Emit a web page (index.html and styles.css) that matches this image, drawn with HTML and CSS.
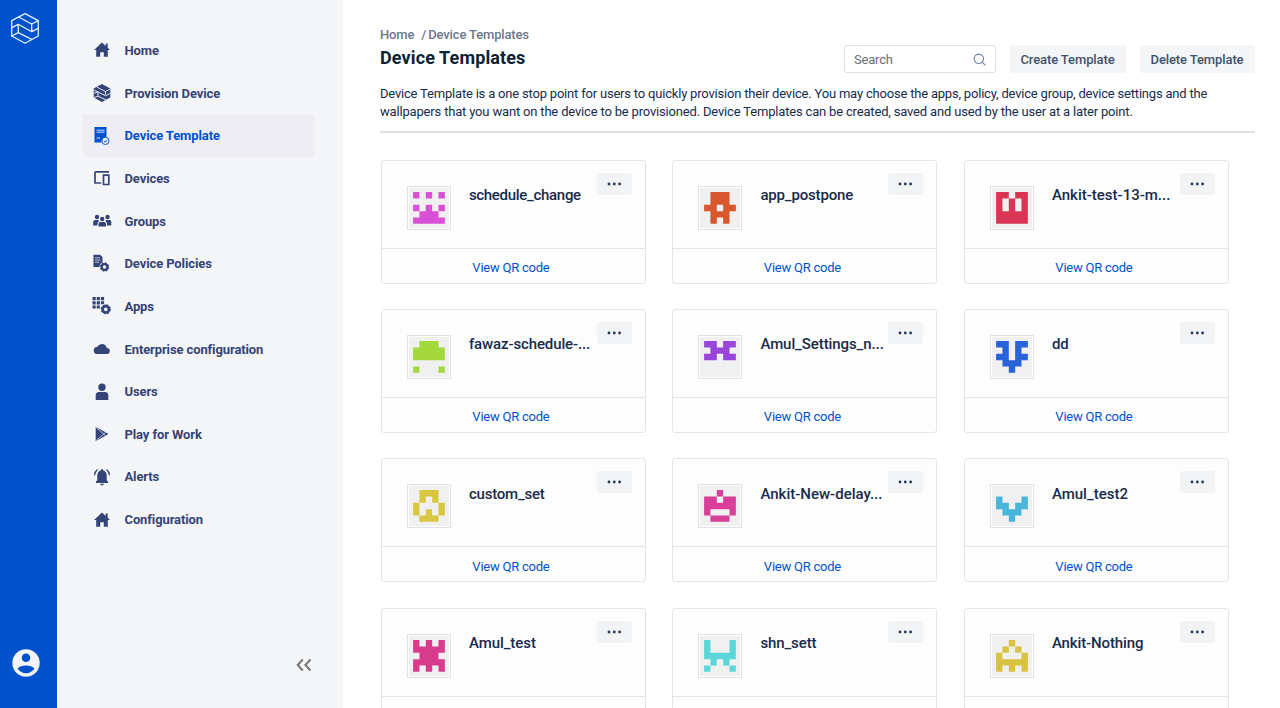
FILE: index.html
```html
<!DOCTYPE html>
<html lang="en">
<head>
<meta charset="utf-8">
<title>Device Templates</title>
<link rel="stylesheet" href="styles.css">
</head>
<body>
<div class="app">
  <aside class="rail">
    <svg class="logo" width="30" height="33" viewBox="0 0 30 33" fill="none" stroke="#e9f0fc" stroke-width="1.3" stroke-linejoin="round" stroke-linecap="round">
      <path d="M15 1.700 28.300 8.700V24L15 31.300 1.700 24V8.700Z"/>
      <path d="M9 5.300 21.700 12 28.300 8.700M21.700 12v7.700M1.700 15.700 8.300 12.300 21.700 19.700 28.300 16.300M8.300 12.300v8.400L21.700 27.300M8.300 20.700 1.700 24"/>
    </svg>
    <svg class="avatar" width="28" height="28" viewBox="0 0 28 28">
      <circle cx="14" cy="14" r="13.700" fill="#f4f5f7"/>
      <circle cx="14" cy="8.700" r="4.300" fill="#0052cc"/>
      <path d="M5.500 19.500C8.500 15.600 19.500 15.600 22.500 19.500 18.500 25.800 9.500 25.800 5.500 19.500Z" fill="#0052cc"/>
    </svg>
  </aside>
  <div class="side">
    <nav class="nav">
      <a class="item"><svg class="icon" viewBox="0 0 18 18"><path d="M9 1.500 1 9h2.200v6.800h4v-4.500h3.600v4.500h4V9H17l-2.300-2.200V2.500h-2v2.400Z"/></svg><span>Home</span></a>
      <a class="item"><svg class="icon" viewBox="0 0 18 18"><path d="M9 0 17.300 4.500v9L9 18 .7 13.500v-9Z"/><path d="M4 3.200 12.500 7.500v3.300M12.500 7.500 17.300 5M.7 6 12.500 11.700l4.800-2.200M.7 9.500 5 7.700v4.500l8.500 4M5 12.200.7 13.700" fill="none" stroke="#f4f5f7" stroke-width=".9"/></svg><span>Provision Device</span></a>
      <a class="item active"><svg class="icon" viewBox="0 0 18 18"><path d="M1.500 0h12v10.500a4.600 4.600 0 0 0-5 5h-7Z"/><path d="M3.500 3.200h8M3.500 5.200h8M3.500 11h3.500" stroke="#eeedf4" stroke-width=".9" fill="none"/><circle cx="12.500" cy="13.900" r="3.600" fill="#eeedf4" stroke="#0052cc" stroke-width=".9"/><path d="m10.800 13.900 1.300 1.300 2.200-2.400" fill="none" stroke="#0052cc"/></svg><span>Device Template</span></a>
      <a class="item"><svg class="icon" viewBox="0 0 18 18" fill="none"><path d="M16 2.800H3.200Q2 2.800 2 4v10h6.200M10.500 6.200h5.300V15.500h-5.300Z" fill="none" stroke="#344378" stroke-width="1.700"/></svg><span>Devices</span></a>
      <a class="item"><svg class="icon" viewBox="0 0 18 18"><circle cx="4" cy="5" r="2.200"/><circle cx="14.500" cy="5" r="2.200"/><circle cx="9.200" cy="7" r="2.200"/><path d="M.2 13.500V10q0-2 2-2h3.500v1.500L4.500 11v2.500ZM18.300 13.500V10q0-2-2-2h-3.500v1.500l1.200 1.500v2.500ZM5.500 14.500V12q0-2 2-2h3.500q2 0 2 2v2.500Z"/></svg><span>Groups</span></a>
      <a class="item"><svg class="icon" viewBox="0 0 18 18"><path d="M.5-.3H7L9.500 2v5.500Q6.300 9 6.500 12h-6Z"/><path d="M2 2.800h5M2 5h5.500M2 7.200h4.500" stroke="#f4f5f7" stroke-width=".7"/><circle cx="11.500" cy="12" r="2.900" fill="none" stroke="#344378" stroke-width="2.300"/><circle cx="11.500" cy="12" r="4.100" fill="none" stroke="#344378" stroke-width="1.200" stroke-dasharray="1.720 1.500"/></svg><span>Device Policies</span></a>
      <a class="item"><svg class="icon" viewBox="0 0 18 18"><path d="M-.5 0h3.200v3.200H-.5ZM3.700 0h3.200v3.200H3.700ZM7.900 0h3.200v3.200H7.900ZM-.5 4.200h3.200v3.200H-.5ZM3.700 4.200h3.200v3.200H3.700ZM7.900 4.200h3.200v2.600l-3.200.6ZM-.5 8.400h3.200v3.200H-.5ZM3.700 8.400h3.200v3.200H3.700Z"/><circle cx="12.800" cy="12.300" r="3.200" fill="none" stroke="#344378" stroke-width="2.600"/><circle cx="12.800" cy="12.300" r="4.500" fill="none" stroke="#344378" stroke-width="1.200" stroke-dasharray="1.900 1.630"/></svg><span>Apps</span></a>
      <a class="item"><svg class="icon" viewBox="0 0 18 18"><path d="M4.500 14a3.500 3.500 0 0 1-.5-7Q6 4 9 4q3.800 0 4.800 4 3 .2 3 3t-3 3Z"/></svg><span>Enterprise configuration</span></a>
      <a class="item"><svg class="icon" viewBox="0 0 18 18"><circle cx="9" cy="4.300" r="3.700"/><path d="M2.700 17V12.500Q2.700 9 6 9h6q3.300 0 3.300 3.500V17Z"/></svg><span>Users</span></a>
      <a class="item"><svg class="icon" viewBox="0 0 18 18"><path d="M2.700 1.800 15.500 9 2.700 16.200Z"/><path d="m3 15.700 9.500-8.300M3 2.300l9.500 8.300" fill="none" stroke="#f4f5f7" stroke-width=".7"/><path d="M3.500 4v10L9.500 9Z"/></svg><span>Play for Work</span></a>
      <a class="item"><svg class="icon" viewBox="0 0 18 18"><path d="M3 15v-1.500l1.300-1.300V7.300Q4.500 3.300 8 2.300V1.200h2v1.100q3.500 1 3.700 5v4.900L15 13.500V15ZM7 15.700h4q-.5 1.700-2 1.700t-2-1.700Z"/><path d="M4.500 1.500Q1.800 3.500 1.500 7.300M13.500 1.500Q16.200 3.500 16.500 7.300" fill="none" stroke="#344378" stroke-width="1.300"/></svg><span>Alerts</span></a>
      <a class="item"><svg class="icon" viewBox="0 0 18 18"><path d="M9 1.500 1 9h2.200v6.800h4v-4.500h3.600v4.500h4V9H17l-2.300-2.200V2.500h-2v2.400Z"/></svg><span>Configuration</span></a>
    </nav>
    <svg class="collapse" width="16" height="14" viewBox="0 0 16 14" fill="none" stroke="#777" stroke-width="2"><path d="M6.800 1.500 1.700 7l5.100 5.500M14.500 1.500 9.400 7l5.100 5.500"/></svg>
  </div>
  <main class="main">
    <header class="head">
      <div>
        <div class="crumbs"><span>Home</span><span class="sep">/</span><span>Device Templates</span></div>
        <h1 class="title">Device Templates</h1>
      </div>
      <div class="tools">
        <div class="search"><span>Search</span><svg width="13" height="13" viewBox="0 0 13 13" fill="none" stroke="#7083a3" stroke-width="1.100"><circle cx="5.800" cy="5.800" r="4.700"/><path d="m9.200 9.200 3.200 3.200"/></svg></div>
        <button class="btn create">Create Template</button>
        <button class="btn delete">Delete Template</button>
      </div>
    </header>
    <p class="intro"><span class="line1">Device Template is a one stop point for users to quickly provision their device. You may choose the apps, policy, device group, device settings and the</span><br><span class="line2">wallpapers that you want on the device to be provisioned. Device Templates can be created, saved and used by the user at a later point.</span></p>
    <section class="grid" id="grid"></section>
  </main>
</div>
<script src="app.js"></script>
</body>
</html>
```
FILE: styles.css
```css
* { box-sizing: border-box; }
body { margin: 0; font-family: Roboto, "Liberation Sans", sans-serif; color: #172b4d; background: #fff; }
.app { display: flex; height: 708px; overflow: hidden; }
.rail { width: 56.500px; flex: none; background: #0052cc; display: flex; flex-direction: column; justify-content: space-between; padding: 12px 0 31px 10px; }
.avatar { margin-left: 2px; }
.side { width: 286.500px; flex: none; background: #f4f5f7; padding: 29.100px 29.500px 0 26.500px; display: flex; flex-direction: column; }
.nav { display: flex; flex-direction: column; }
.item { display: flex; align-items: center; height: 42.670px; padding-left: 10px; gap: 13.500px; border-radius: 3px; font-size: 13px; font-weight: 700; color: #344378; white-space: nowrap; letter-spacing: -.11px; }
.item.active { background: #eeedf4; color: #0052cc; }
.icon { width: 18px; height: 18px; fill: currentColor; overflow: visible; flex: none; }
.collapse { margin: 117.500px 0 0 213px; }
.main { flex: 1; min-width: 0; padding: 27px 25.500px 0 37px; }
.head { display: flex; justify-content: space-between; height: 58px; }
.crumbs { display: flex; font-size: 13px; line-height: 15px; font-weight: 500; color: #6b778c; letter-spacing: -.15px; }
.sep { margin: 0 2px 0 7px; }
.title { margin: 4px 0 0; font-size: 18px; line-height: 24px; font-weight: 700; color: #0c2333; letter-spacing: .12px; }
.tools { display: flex; padding-top: 18px; }
.search { width: 152px; height: 28px; border: 1.500px solid #dfe1e6; border-radius: 3px; display: flex; align-items: center; justify-content: space-between; padding: 0 9px 0 9.500px; font-size: 13px; color: #6b6f76; letter-spacing: -.2px; }
.btn { font: 500 13px Roboto, sans-serif; height: 28px; border: 0; border-radius: 3px; background: #f4f5f7; color: #42526e; margin-left: 14px; padding: 0; white-space: nowrap; letter-spacing: -.1px; }
.create { width: 116px; }
.delete { width: 115px; }
.intro { margin: 0; height: 48px; border-bottom: 2px solid #dfe1e6; font-size: 13px; line-height: 18px; white-space: nowrap; }
.line1 { letter-spacing: -.196px; }
.line2 { letter-spacing: -.175px; }
.grid { display: grid; grid-template-columns: repeat(3, 265px); column-gap: 26.500px; row-gap: 25.330px; padding: 26.600px 0 0 .900px; }
.card { height: 124px; border: 1px solid #e3e5e8; border-radius: 3px; background: #fdfdfd; display: flex; flex-direction: column; }
.body { height: 87px; display: flex; padding-left: 25px; flex: none; }
.thumb { width: 44px; height: 44px; margin-top: 25px; border: 1px solid #dfe1e6; padding: 1px; background: #fff; flex: none; }
.thumb svg { display: block; width: 40px; height: 40px; }
.name { width: 128px; margin: 23.300px 0 0 18px; font-size: 15px; line-height: 22px; font-weight: 500; white-space: nowrap; }
.more { width: 35px; height: 22px; margin-top: 12px; border-radius: 3px; background: #f2f3f5; display: flex; align-items: center; justify-content: center; }
.more svg { width: 15px; height: 4px; fill: #253858; }
.qr { flex: 1; border-top: 1px solid #e3e5e8; display: flex; align-items: center; justify-content: center; padding: 3.600px 5px 0 0; font-size: 13px; color: #0052cc; letter-spacing: -.24px; }
```
FILE: app.js
```js
// name, tint, 5x5 pattern, letter spacing of the name in px
const templates = [
  ["schedule_change", "#d94fd6", "10101 00000 10101 01110 11111", -0.3],
  ["app_postpone", "#d9572f", "01110 01110 11011 01110 01010", -0.16],
  ["Ankit-test-13-m...", "#d93656", "11011 10101 10101 11111 11111", 0],
  ["fawaz-schedule-...", "#a3d93c", "01110 11111 11111 00000 10001", -0.12],
  ["Amul_Settings_n...", "#9845d9", "11011 01110 11011 00000 00000", -0.08],
  ["dd", "#2962d9", "11011 01010 11011 01110 00100", 0],
  ["custom_set", "#d9c73f", "01110 01010 10001 10101 01110", -0.2],
  ["Ankit-New-delay...", "#d93f98", "00100 11011 11111 10001 01110", 0],
  ["Amul_test2", "#48b5d9", "00000 10001 11011 01110 00100", 0],
  ["Amul_test", "#d93b8c", "10101 11111 01110 11111 10101", -0.06],
  ["shn_sett", "#5bd6d9", "10001 10001 11111 01010 10001", -0.1],
  ["Ankit-Nothing", "#d9c23f", "00100 01010 10001 11111 10101", -0.12]
];

const cell = 6.35;

function identicon(color, pattern) {
  let d = "";
  pattern.split(" ").forEach((row, y) => [...row].forEach((on, x) => {
    if (on === "1") d += `M${4.1 + x * cell} ${4.1 + y * cell}h${cell}v${cell}h-${cell}Z`;
  }));
  return `<svg viewBox="0 0 40 40"><rect width="40" height="40" fill="#f0f0f0"/><path d="${d}" fill="${color}"/></svg>`;
}

document.getElementById("grid").innerHTML = templates.map(([name, color, pattern, spacing]) => `
  <article class="card">
    <div class="body">
      <div class="thumb">${identicon(color, pattern)}</div>
      <div class="name" style="letter-spacing:${spacing}px"><span>${name}</span></div>
      <div class="more"><svg viewBox="0 0 15 4"><circle cx="2" cy="2" r="1.4"/><circle cx="7.300" cy="2" r="1.4"/><circle cx="12.600" cy="2" r="1.4"/></svg></div>
    </div>
    <div class="qr"><span>View QR code</span></div>
  </article>`).join("");
```
